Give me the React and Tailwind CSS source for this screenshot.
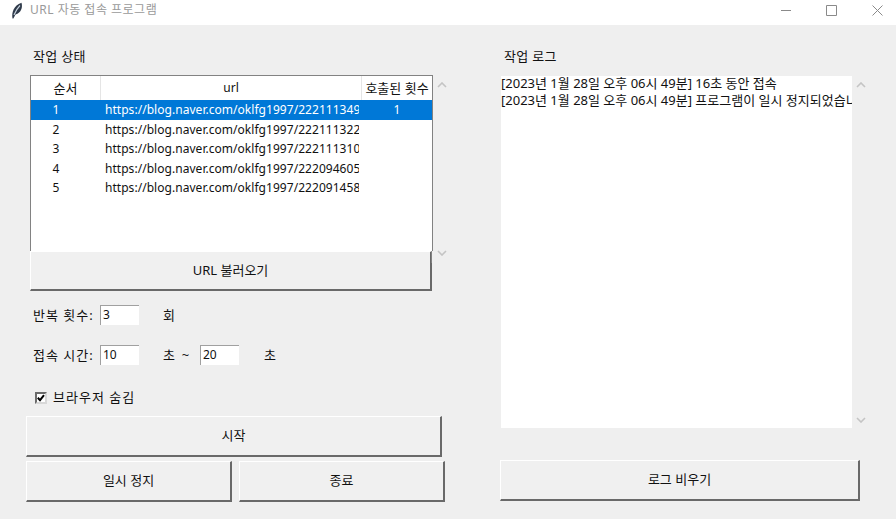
import { useState } from 'react';

const FONT = "font-['Noto_Sans','Noto_Sans_CJK_KR',sans-serif]";

const rows = [
    { no: 1, url: 'https://blog.naver.com/oklfg1997/222111349712', count: '1' },
    { no: 2, url: 'https://blog.naver.com/oklfg1997/222111322061', count: '' },
    { no: 3, url: 'https://blog.naver.com/oklfg1997/222111310175', count: '' },
    { no: 4, url: 'https://blog.naver.com/oklfg1997/222094605063', count: '' },
    { no: 5, url: 'https://blog.naver.com/oklfg1997/222091458590', count: '' },
];

function TkButton({ className, children }) {
    return (
        <button className={`relative flex items-center justify-center bg-[#f0f0f0] border-t border-l border-b-2 border-r-2 border-t-white border-l-white border-b-[#696969] border-r-[#696969] text-[13px] text-[#111] ${className}`}>
            {children}
        </button>
    );
}

function Chevron({ down }) {
    return (
        <svg width="10" height="6" viewBox="0 0 10 6" fill="none" stroke="#c4c4c4" strokeWidth="1.6">
            <path d={down ? 'M1 1l4 4 4-4' : 'M1 5l4-4 4 4'} />
        </svg>
    );
}

function Field({ value }) {
    return (
        <div className="w-[39px] h-[20px] bg-white border-t border-l border-t-[#a0a0a0] border-l-[#a0a0a0] pl-[2px] text-[12px] leading-[17px]">
            {value}
        </div>
    );
}

export default function App() {
    const [hidden, setHidden] = useState(true);

    return (
        <div className={`w-[896px] h-[519px] overflow-hidden flex flex-col bg-[#efefef] text-[#111] ${FONT}`}>
            {/* Title bar */}
            <div className="h-[25px] shrink-0 bg-white flex items-center pl-[11px] pb-[5px]">
                <svg width="12" height="17" viewBox="0 0 12 17">
                    <path d="M1.5 16.5C0.5 11 2.5 3.5 10.5 0.8 11.8 5 10.5 11 4.5 12.5L2.4 16.5Z" fill="#2f3a4a" />
                    <path d="M3 13C4.5 9.5 6 6.5 9 3.5" stroke="#c8d4e0" strokeWidth="1.1" fill="none" />
                </svg>
                <span className="ml-[7px] text-[12px] tracking-[0.5px] text-[#9a9a9a]">URL 자동 접속 프로그램</span>
                <div className="ml-auto flex items-center">
                    <svg width="10" height="11" viewBox="0 0 10 11" stroke="#8a8a8a" fill="none"><path d="M0 5.5h10" /></svg>
                    <svg className="ml-[35px]" width="11" height="11" viewBox="0 0 11 11" stroke="#8a8a8a" fill="none"><path d="M.5.5h10v10H.5z" /></svg>
                    <svg className="ml-[35px] mr-[13px]" width="11" height="11" viewBox="0 0 11 11" stroke="#8a8a8a" fill="none"><path d="M.5.5l10 10M10.5.5l-10 10" /></svg>
                </div>
            </div>

            <div className="flex-1 flex">
                {/* Left column */}
                <div className="w-[500px] shrink-0 pl-[26px] flex flex-col">
                    <div className="pl-[7px] pt-[20px] h-[50px] text-[13px] tracking-[0.3px] leading-[22px]">작업 상태</div>

                    <div className="pl-[4px] flex">
                        <div className="w-[403px] h-[176px] bg-white border-t border-l border-r border-[#828282] overflow-hidden text-[12px]">
                            <div className="flex h-[24px] items-center">
                                <div className="w-[70px] text-center border-r border-[#e5e5e5] text-[13px] leading-[24px]">순서</div>
                                <div className="w-[261px] text-center border-r border-[#e5e5e5] leading-[24px]">url</div>
                                <div className="w-[70px] text-center whitespace-nowrap text-[13px] leading-[24px]">호출된 횟수</div>
                            </div>
                            {rows.map((row) => (
                                <div key={row.no} className={`flex h-[19.6px] leading-[19px] ${row.no === 1 ? 'bg-[#0078d7] text-white' : ''}`}>
                                    <div className="w-[50px] text-center">{row.no}</div>
                                    <div className="w-[20px]"></div>
                                    <div className="w-[258px] pl-[4px] overflow-hidden whitespace-nowrap tracking-[0.04px]">{row.url}</div>
                                    <div className="w-[3px]"></div>
                                    <div className="w-[70px] text-center">{row.count}</div>
                                </div>
                            ))}
                        </div>
                        <div className="w-[16px] h-[181px] flex flex-col items-center justify-between pt-[7px] pl-[2px]">
                            <Chevron />
                            <Chevron down />
                        </div>
                    </div>

                    <div className="pl-[4px] -mt-[5px]">
                        <TkButton className="w-[402px] h-[40px]">
                            URL 불러오기
                            <span className="absolute right-[-2px] top-0 w-[1px] h-[11px] bg-[#828282]"></span>
                        </TkButton>
                    </div>

                    <div className="mt-[14px] pl-[7px] h-[20px] flex items-center text-[13px]">
                        <span className="w-[67px] whitespace-nowrap tracking-[1px] pt-[2px]">반복 횟수:</span>
                        <Field value="3" />
                        <span className="ml-[24px] pt-[2px]">회</span>
                    </div>

                    <div className="mt-[20px] pl-[7px] h-[20px] flex items-center text-[13px]">
                        <span className="w-[67px] whitespace-nowrap tracking-[1px] pt-[2px]">접속 시간:</span>
                        <Field value="10" />
                        <span className="ml-[24px] w-[37px] whitespace-pre pt-[2px]">초  ~</span>
                        <Field value="20" />
                        <span className="ml-[25px] pt-[2px]">초</span>
                    </div>

                    <label className="mt-[23px] pl-[9px] h-[20px] flex items-center text-[13px]">
                        <input type="checkbox" checked={hidden} onChange={() => setHidden(!hidden)} className="sr-only" />
                        <span className="w-[12px] h-[12px] bg-white border-2 border-t-[#6a6a6a] border-l-[#6a6a6a] border-b-[#d8d8d8] border-r-[#d8d8d8] flex items-center justify-center">
                            {hidden && (
                                <svg width="8" height="8" viewBox="0 0 8 8" fill="none" stroke="#000" strokeWidth="2"><path d="M.8 3.8l2.2 2.4 4-5" /></svg>
                            )}
                        </span>
                        <span className="ml-[6px] tracking-[1px]">브라우저 숨김</span>
                    </label>

                    <TkButton className="mt-[8px] w-[416px] h-[41px]">시작</TkButton>
                    <div className="mt-[4px] flex gap-[7px]">
                        <TkButton className="w-[206px] h-[41px]">일시 정지</TkButton>
                        <TkButton className="w-[206px] h-[41px]">종료</TkButton>
                    </div>
                </div>

                {/* Right column */}
                <div className="flex-1 flex flex-col">
                    <div className="pl-[4px] pt-[20px] h-[51px] text-[13px] tracking-[0.3px] leading-[22px]">작업 로그</div>
                    <div className="pl-[1px] flex">
                        <div className="w-[351px] h-[352px] bg-white overflow-hidden text-[13px] whitespace-nowrap">
                            <div className="leading-[15px]">[2023년 1월 28일 오후 06시 49분] 16초 동안 접속</div>
                            <div className="leading-[19px]">[2023년 1월 28일 오후 06시 49분] 프로그램이 일시 정지되었습니다.</div>
                        </div>
                        <div className="w-[16px] h-[352px] flex flex-col items-center justify-between pt-[6px] pb-[5px] pl-[1px]">
                            <Chevron />
                            <Chevron down />
                        </div>
                    </div>
                    <TkButton className="mt-[32px] w-[360px] h-[41px]">로그 비우기</TkButton>
                </div>
            </div>
        </div>
    );
}
